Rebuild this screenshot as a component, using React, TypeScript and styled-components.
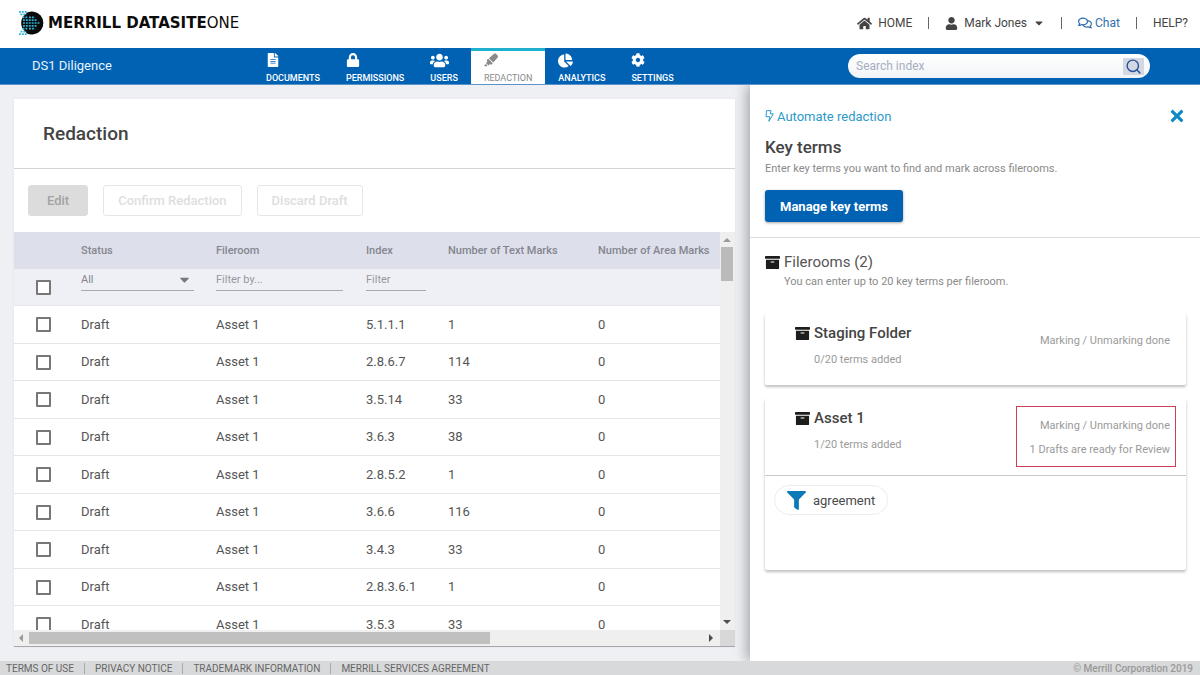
import React from "react";
import styled, { createGlobalStyle } from "styled-components";
import {
  FaArchive, FaCaretDown, FaChartPie, FaCog, FaFileAlt, FaFilter, FaHighlighter,
  FaHome, FaLock, FaRegComments, FaTimes, FaUser, FaUsers,
} from "react-icons/fa";
import { FiSearch } from "react-icons/fi";

const GlobalStyle = createGlobalStyle`
  * { box-sizing: border-box; }
  body { margin: 0; font-family: Roboto, "Liberation Sans", sans-serif; color: #444; background: #eff0f4; }
  button, input, select { font-family: inherit; }
  h1, h2, h3, p, ul { margin: 0; padding: 0; }
  a { color: inherit; text-decoration: none; }
`;

const Page = styled.div`
  display: flex;
  flex-direction: column;
  height: 100vh;
`;

const TopBar = styled.header`
  display: flex;
  align-items: center;
  justify-content: space-between;
  flex: none;
  height: 48px;
  padding: 0 12px 2px 18px;
  background: #fff;
`;

const Brand = styled.a`
  display: flex;
  align-items: center;
  gap: 4px;
  font: 700 15px/16px "DejaVu Sans", sans-serif;
  color: #0c0c0c;
  white-space: nowrap;
`;

const BrandLight = styled.span`
  font-weight: 400;
`;

const UserNav = styled.nav`
  display: flex;
  align-items: center;
  gap: 16px;
  font-size: 12px;
  line-height: 16px;
`;

const UserLink = styled.a<{ $blue?: boolean; $gap?: number }>`
  display: flex;
  align-items: center;
  gap: ${(p) => p.$gap ?? 6}px;
  color: ${(p) => (p.$blue ? "#2f6fae" : "#444")};
`;

const Divider = styled.span`
  width: 1px;
  height: 12px;
  background: #666;
`;

const NavBar = styled.div`
  display: flex;
  align-items: stretch;
  flex: none;
  height: 37px;
  background: #0162b4;
  border-bottom: 1px solid #5c93c6;
`;

const ProjectName = styled.div`
  width: 253px;
  padding-left: 32px;
  font-size: 13px;
  line-height: 36px;
  color: #e8f4ff;
`;

const Tabs = styled.nav`
  display: flex;
  flex: 1;
`;

const Tab = styled.a<{ $active?: boolean }>`
  display: flex;
  flex-direction: column;
  justify-content: space-between;
  padding: 2px 13px 0;
  border-top: 3px solid ${(p) => (p.$active ? "#1fb0cf" : "transparent")};
  background: ${(p) => (p.$active ? "#fff" : "transparent")};
  color: ${(p) => (p.$active ? "#8a8a8a" : "#fff")};
  font-size: 9px;
  font-weight: ${(p) => (p.$active ? 400 : 500)};
  line-height: 12px;
`;

const SearchBox = styled.form`
  display: flex;
  align-items: center;
  align-self: center;
  width: 302px;
  height: 24px;
  margin-right: 50px;
  padding: 0 6px 0 8px;
  border-radius: 12px;
  background: linear-gradient(#fff, #f1f4f7);
`;

const SearchInput = styled.input`
  flex: 1;
  min-width: 0;
  padding: 0;
  border: 0;
  outline: 0;
  background: none;
  font-size: 12px;
  color: #444;
  &::placeholder { color: #a9aebf; opacity: 1; }
`;

const SearchButton = styled.button`
  display: grid;
  place-items: center;
  width: 21px;
  height: 17px;
  padding: 0;
  border: 0;
  background: #d4d8e2;
  color: #27539c;
`;

const Body = styled.div`
  display: grid;
  grid-template-columns: 5fr 3fr;
  flex: 1;
  min-height: 0;
`;

const Main = styled.main`
  display: flex;
  min-width: 0;
  min-height: 0;
  padding: 14px 15px 14px 14px;
`;

const Card = styled.section`
  display: flex;
  flex-direction: column;
  flex: 1;
  min-width: 0;
  background: #fff;
  border-bottom: 1px solid #a5a7ab;
  box-shadow: 0 0 3px rgba(0, 0, 0, 0.06);
`;

const CardTitle = styled.h1`
  height: 70px;
  padding-left: 29px;
  border-bottom: 1px solid #d3d4d6;
  font-size: 19px;
  font-weight: 500;
  line-height: 70px;
  color: #444;
`;

const Actions = styled.div`
  display: flex;
  gap: 15px;
  padding: 16px 14px;
  height: 63px;
`;

const ActionButton = styled.button<{ $filled?: boolean }>`
  height: 31px;
  padding: 0 ${(p) => (p.$filled ? 18 : 14)}px;
  border: 1px solid ${(p) => (p.$filled ? "#dcdcdc" : "#e6e6e6")};
  border-radius: 3px;
  background: ${(p) => (p.$filled ? "#dcdcdc" : "#fff")};
  color: ${(p) => (p.$filled ? "#a3a3a3" : "#dedede")};
  font-size: 13px;
  font-weight: 500;
`;

const ScrollFrame = styled.div`
  display: grid;
  grid-template-columns: minmax(0, 1fr) 15px;
  grid-template-rows: minmax(0, 1fr) 16px;
  flex: 1;
  min-height: 0;
`;

const TableView = styled.div`
  overflow: hidden;
`;

const Table = styled.table`
  width: 100%;
  table-layout: fixed;
  border-collapse: separate;
  border-spacing: 0;
  th, td { padding: 0; text-align: left; white-space: nowrap; }
`;

const HeadRow = styled.tr`
  height: 37px;
  background: #dddfea;
  th { font-size: 11px; font-weight: 500; color: #85868f; }
`;

const FilterRow = styled.tr`
  height: 37px;
  background: #eff0f5;
  td { vertical-align: top; border-bottom: 1px solid #e6e7ea; }
`;

const Row = styled.tr`
  height: 37px;
  &:nth-child(odd) { height: 38px; }
  td { font-size: 13px; line-height: 12px; color: #555; border-bottom: 1px solid #e4e5e7; }
`;

const Check = styled.input<{ $low?: boolean }>`
  appearance: none;
  display: block;
  width: 15px;
  height: 15px;
  margin: ${(p) => (p.$low ? "11px" : "0")} 0 0 22px;
  border: 2px solid #777;
  border-radius: 1px;
  background: #fff;
`;

const FilterField = styled.div<{ $w: number }>`
  display: flex;
  align-items: center;
  width: ${(p) => p.$w}px;
  height: 22px;
  padding-right: 2px;
  border-bottom: 1px solid #a8a9ae;
  color: #77787d;
  select, input {
    appearance: none;
    flex: 1;
    min-width: 0;
    width: 100%;
    padding: 0;
    border: 0;
    outline: 0;
    background: none;
    font-size: 11px;
    color: #85868c;
  }
  input::placeholder { color: #97989e; opacity: 1; }
`;

const VerticalBar = styled.div`
  display: flex;
  flex-direction: column;
  align-items: center;
  padding: 4px 2px 4px 1px;
  background: #efefef;
`;

const HorizontalBar = styled.div`
  display: flex;
  align-items: center;
  padding: 1px 5px 1px 3px;
  background: #efefef;
`;

const Corner = styled.div`
  background: #d8d8d8;
`;

const Spacer = styled.div`
  flex: 1;
`;

const VerticalThumb = styled.div`
  width: 12px;
  height: 34px;
  margin-top: 3px;
  background: #bababa;
`;

const HorizontalThumb = styled.div`
  width: 66%;
  height: 12px;
  margin-left: 4px;
  background: #c0c0c0;
`;

const Side = styled.aside`
  display: flex;
  flex-direction: column;
  min-width: 0;
  background: #fff;
  box-shadow: -3px 0 12px rgba(0, 0, 0, 0.32);
  clip-path: inset(0 0 0 -20px);
`;

const SideTop = styled.div`
  height: 153px;
  padding: 21px 14px 0 15px;
  border-bottom: 1px solid #dcdcdc;
`;

const SideHeading = styled.div`
  display: flex;
  align-items: center;
  justify-content: space-between;
  height: 20px;
`;

const AutomateLink = styled.a`
  display: flex;
  align-items: center;
  gap: 3px;
  font-size: 13px;
  color: #2b9ac8;
`;

const CloseButton = styled.button`
  display: flex;
  padding: 0;
  border: 0;
  background: none;
  color: #108ac6;
`;

const Title = styled.h2`
  margin-top: 9px;
  font-size: 17px;
  font-weight: 500;
  line-height: 24px;
  color: #444;
`;

const Note = styled.p<{ $indent?: boolean }>`
  margin-top: 2px;
  padding-left: ${(p) => (p.$indent ? 19 : 0)}px;
  font-size: 11px;
  line-height: 16px;
  color: #8a8a8a;
`;

const PrimaryButton = styled.button`
  height: 32px;
  margin-top: 13px;
  padding: 0 15px;
  border: 0;
  border-radius: 3px;
  background: #0162b4;
  box-shadow: 0 1px 3px rgba(0, 0, 0, 0.35);
  color: #fff;
  font-size: 13px;
  font-weight: 700;
`;

const SideBody = styled.div`
  padding: 14px 14px 0 15px;
`;

const IconTitle = styled.h3<{ $medium?: boolean }>`
  display: flex;
  align-items: center;
  gap: 4px;
  font-size: 15px;
  font-weight: ${(p) => (p.$medium ? 500 : 400)};
  line-height: 20px;
  color: ${(p) => (p.$medium ? "#444" : "#555")};
  svg { color: #1d1d1d; }
`;

const Rooms = styled.div`
  display: flex;
  flex-direction: column;
  gap: 13px;
  margin-top: 23px;
`;

const Room = styled.article`
  box-shadow: 0 2px 3px rgba(0, 0, 0, 0.26);
  border-radius: 2px;
`;

const RoomHead = styled.div<{ $open?: boolean }>`
  display: flex;
  justify-content: space-between;
  height: ${(p) => (p.$open ? 78 : 72)}px;
  padding: 8px 10px 0 30px;
  border-bottom: ${(p) => (p.$open ? "1px solid #c6c8ca" : "0")};
`;

const RoomInfo = styled.div`
  padding-top: 2px;
`;

const TermCount = styled.p`
  margin-top: 9px;
  padding-left: 19px;
  font-size: 11px;
  line-height: 16px;
  color: #9a9a9a;
`;

const RoomStatus = styled.div<{ $marked?: boolean }>`
  display: flex;
  flex-direction: column;
  align-self: flex-start;
  gap: 8px;
  padding: ${(p) => (p.$marked ? "11px 5px 8px 13px" : "12px 6px 0 0")};
  border: ${(p) => (p.$marked ? "1px solid #c8405a" : "0")};
  font-size: 11px;
  line-height: 16px;
  text-align: right;
  color: #9a9a9a;
`;

const Terms = styled.div`
  height: 94px;
  padding: 9px;
`;

const Term = styled.button`
  display: flex;
  align-items: center;
  gap: 7px;
  height: 30px;
  padding: 0 12px;
  border: 1px solid #ececec;
  border-radius: 15px;
  background: #fff;
  font-size: 13px;
  color: #4a4a4a;
  svg { color: #0d79b9; }
`;

const Footer = styled.footer`
  display: flex;
  align-items: center;
  justify-content: space-between;
  flex: none;
  height: 14px;
  padding: 0 7px 0 6px;
  background: #d8d9da;
  font-size: 10px;
  color: #666;
`;

const FooterLinks = styled.nav`
  display: flex;
  a + a { margin-left: 10px; padding-left: 10px; border-left: 1px solid #aaa; }
`;

const Copyright = styled.small`
  font-size: 10px;
  font-weight: 500;
  color: #999;
`;

const LogoMark = () => (
  <svg width="26" height="26" viewBox="0 0 26 26" aria-hidden="true">
    <path d="M8 3.100A11.500 11.500 0 1 1 8 22.900 16 16 0 0 0 8 3.100z" fill="#0a0a0a" />
    <circle cx="14" cy="13" r="10.800" fill="#0a0a0a" />
    <g stroke="#2fb4d8" strokeWidth="1.700" strokeDasharray="1.900 1" fill="none">
      <path d="M1 1.800h8M2.500 4.400h6" />
      <path d="M5 10.200h14M5 13h17M5 15.800h14M11 7.400h6M11 18.600h6" />
      <path d="M1 24.200h8M2.500 21.600h6" />
      <path d="M4.500 7.400h5M4.500 18.600h5" />
    </g>
  </svg>
);

const BoltIcon = () => (
  <svg width="9" height="12" viewBox="0 0 9 12" fill="none" stroke="currentColor" strokeWidth="1" strokeLinejoin="round" aria-hidden="true">
    <path d="M1.500.7h4.600L5.300 3.800h3L3.900 11.300l.8-4.600H1z" />
  </svg>
);

const Arrow = ({ d, faint }: { d: "up" | "down" | "left" | "right"; faint?: boolean }) => {
  const shape = { up: "M0 6L4 2l4 4z", down: "M0 2l4 4 4-4z", left: "M6 0L2 4l4 4z", right: "M2 0l4 4-4 4z" }[d];
  return (
    <svg width="8" height="8" viewBox="0 0 8 8" fill={faint ? "#9a9a9a" : "#4d4d4d"} aria-hidden="true">
      <path d={shape} />
    </svg>
  );
};

const tabs = [
  { label: "DOCUMENTS", icon: <FaFileAlt size={14} /> },
  { label: "PERMISSIONS", icon: <FaLock size={14} /> },
  { label: "USERS", icon: <FaUsers size={19} /> },
  { label: "REDACTION", icon: <FaHighlighter size={14} />, active: true },
  { label: "ANALYTICS", icon: <FaChartPie size={15} /> },
  { label: "SETTINGS", icon: <FaCog size={14} /> },
];

const TabIcon = styled.span`
  display: flex;
  align-items: center;
  height: 14px;
`;

const rows: [string, number][] = [
  ["5.1.1.1", 1], ["2.8.6.7", 114], ["3.5.14", 33], ["3.6.3", 38], ["2.8.5.2", 1],
  ["3.6.6", 116], ["3.4.3", 33], ["2.8.3.6.1", 1], ["3.5.3", 33],
];

export default function App() {
  return (
    <Page>
      <GlobalStyle />
      <TopBar>
        <Brand href="#">
          <LogoMark />
          <span>MERRILL DATASITE<BrandLight>ONE</BrandLight></span>
        </Brand>
        <UserNav aria-label="Account">
          <UserLink href="#"><FaHome size={15} />HOME</UserLink>
          <Divider />
          <UserLink href="#"><FaUser size={13} />Mark Jones<FaCaretDown size={12} /></UserLink>
          <Divider />
          <UserLink href="#" $blue $gap={3}><FaRegComments size={14} />Chat</UserLink>
          <Divider />
          <UserLink href="#">HELP?</UserLink>
        </UserNav>
      </TopBar>
      <NavBar>
        <ProjectName>DS1 Diligence</ProjectName>
        <Tabs aria-label="Sections">
          {tabs.map((t) => (
            <Tab key={t.label} href="#" $active={t.active}>
              <TabIcon>{t.icon}</TabIcon>
              {t.label}
            </Tab>
          ))}
        </Tabs>
        <SearchBox role="search">
          <SearchInput aria-label="Search index" placeholder="Search index" />
          <SearchButton type="button" aria-label="Search"><FiSearch size={17} /></SearchButton>
        </SearchBox>
      </NavBar>
      <Body>
        <Main>
          <Card>
            <CardTitle>Redaction</CardTitle>
            <Actions>
              <ActionButton type="button" disabled $filled>Edit</ActionButton>
              <ActionButton type="button" disabled>Confirm Redaction</ActionButton>
              <ActionButton type="button" disabled>Discard Draft</ActionButton>
            </Actions>
            <ScrollFrame>
              <TableView>
                <Table>
                  <colgroup>
                    <col width="67" /><col width="135" /><col width="150" />
                    <col width="82" /><col width="150" /><col />
                  </colgroup>
                  <thead>
                    <HeadRow>
                      <th aria-label="Select" /><th>Status</th><th>Fileroom</th><th>Index</th>
                      <th>Number of Text Marks</th><th>Number of Area Marks</th>
                    </HeadRow>
                    <FilterRow>
                      <td><Check type="checkbox" aria-label="Select all" $low /></td>
                      <td>
                        <FilterField $w={113}>
                          <select aria-label="Filter by status"><option>All</option></select>
                          <FaCaretDown size={15} />
                        </FilterField>
                      </td>
                      <td><FilterField $w={127}><input aria-label="Filter by fileroom" placeholder="Filter by..." /></FilterField></td>
                      <td><FilterField $w={60}><input aria-label="Filter by index" placeholder="Filter" /></FilterField></td>
                      <td /><td />
                    </FilterRow>
                  </thead>
                  <tbody>
                    {rows.map(([index, marks]) => (
                      <Row key={index}>
                        <td><Check type="checkbox" aria-label={`Select ${index}`} /></td>
                        <td>Draft</td><td>Asset 1</td><td>{index}</td><td>{marks}</td><td>0</td>
                      </Row>
                    ))}
                  </tbody>
                </Table>
              </TableView>
              <VerticalBar>
                <Arrow d="up" faint /><VerticalThumb /><Spacer /><Arrow d="down" />
              </VerticalBar>
              <HorizontalBar>
                <Arrow d="left" faint /><HorizontalThumb /><Spacer /><Arrow d="right" />
              </HorizontalBar>
              <Corner />
            </ScrollFrame>
          </Card>
        </Main>
        <Side>
          <SideTop>
            <SideHeading>
              <AutomateLink href="#"><BoltIcon />Automate redaction</AutomateLink>
              <CloseButton type="button" aria-label="Close"><FaTimes size={18} /></CloseButton>
            </SideHeading>
            <Title>Key terms</Title>
            <Note>Enter key terms you want to find and mark across filerooms.</Note>
            <PrimaryButton type="button">Manage key terms</PrimaryButton>
          </SideTop>
          <SideBody>
            <IconTitle><FaArchive size={15} />Filerooms (2)</IconTitle>
            <Note $indent>You can enter up to 20 key terms per fileroom.</Note>
            <Rooms>
              <Room>
                <RoomHead>
                  <RoomInfo>
                    <IconTitle $medium><FaArchive size={15} />Staging Folder</IconTitle>
                    <TermCount>0/20 terms added</TermCount>
                  </RoomInfo>
                  <RoomStatus><p>Marking / Unmarking done</p></RoomStatus>
                </RoomHead>
              </Room>
              <Room>
                <RoomHead $open>
                  <RoomInfo>
                    <IconTitle $medium><FaArchive size={15} />Asset 1</IconTitle>
                    <TermCount>1/20 terms added</TermCount>
                  </RoomInfo>
                  <RoomStatus $marked>
                    <p>Marking / Unmarking done</p>
                    <p>1 Drafts are ready for Review</p>
                  </RoomStatus>
                </RoomHead>
                <Terms>
                  <Term type="button"><FaFilter size={19} />agreement</Term>
                </Terms>
              </Room>
            </Rooms>
          </SideBody>
        </Side>
      </Body>
      <Footer>
        <FooterLinks aria-label="Legal">
          <a href="#">TERMS OF USE</a><a href="#">PRIVACY NOTICE</a>
          <a href="#">TRADEMARK INFORMATION</a><a href="#">MERRILL SERVICES AGREEMENT</a>
        </FooterLinks>
        <Copyright>© Merrill Corporation 2019</Copyright>
      </Footer>
    </Page>
  );
}
